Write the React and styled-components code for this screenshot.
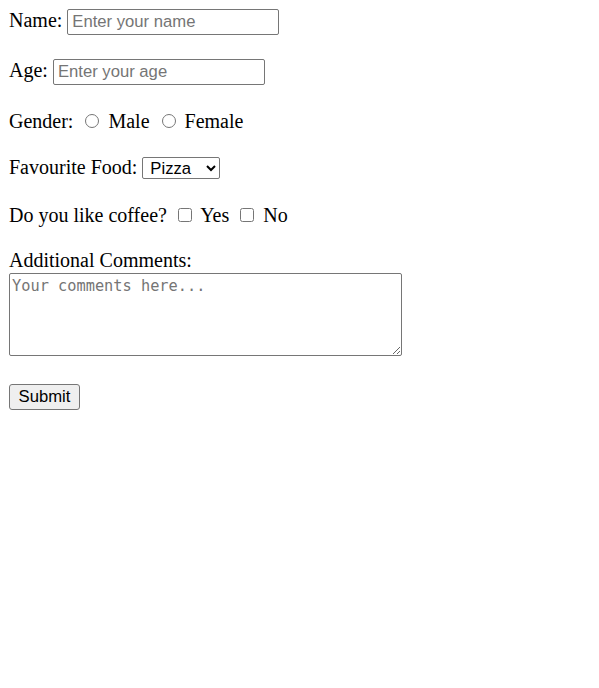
import React from "react";
import styled, { createGlobalStyle } from "styled-components";

const Global = createGlobalStyle`
  body {
    margin: 8px;
    font-family: "Liberation Serif", "Times New Roman", serif;
    font-size: 20px;
    color: #000;
    background: #fff;
  }
`;

const Form = styled.form`
  display: block;
  padding: 1px 0 0 1px;
`;

const Field = styled.div`
  margin-bottom: ${(p) => p.$gap ?? 24}px;
`;

const Label = styled.label``;

const TextInput = styled.input`
  font-family: "Liberation Sans", Arial, sans-serif;
  font-size: 16.67px;
  padding: 2px 4px;
  border: 1px solid #767676;
  border-radius: 2px;
  box-sizing: border-box;
  height: 26px;
  width: 212px;
  &::placeholder {
    color: #757575;
  }
`;

const Choice = styled.input`
  width: 14px;
  height: 14px;
  margin: 3px 4px 0 ${(p) => (p.type === "radio" ? 7 : 6)}px;
`;

const Select = styled.select`
  font-family: "Liberation Sans", Arial, sans-serif;
  font-size: 16.67px;
  width: 78px;
  height: 22px;
  box-sizing: border-box;
  border: 1px solid #767676;
  border-radius: 2px;
  padding: 0 0 0 3px;
  background: #fff;
  color: #000;
`;

const Area = styled.textarea`
  display: block;
  font-family: "DejaVu Sans Mono", monospace;
  font-size: 15.3px;
  width: 393px;
  height: 83px;
  box-sizing: border-box;
  border: 1px solid #767676;
  border-radius: 2px;
  padding: 3px 2px;
  margin: 1px 0 0;
  &::placeholder {
    color: #757575;
  }
`;

const Button = styled.button`
  font-family: "Liberation Sans", Arial, sans-serif;
  font-size: 16.67px;
  height: 26px;
  width: 71px;
  padding: 0;
  box-sizing: border-box;
  border: 1px solid #767676;
  border-radius: 3px;
  background: #efefef;
  color: #000;
`;

export default function App() {
  return (
    <>
      <Global />
      <Form onSubmit={(e) => e.preventDefault()}>
        <Field $gap={24}>
          <Label htmlFor="name">Name:</Label>{" "}
          <TextInput id="name" type="text" placeholder="Enter your name" />
        </Field>
        <Field $gap={25}>
          <Label htmlFor="age">Age:</Label>{" "}
          <TextInput id="age" type="text" placeholder="Enter your age" />
        </Field>
        <Field $gap={23}>
          <Label>Gender:</Label>{" "}
          <Choice type="radio" name="gender" id="male" />{" "}
          <Label htmlFor="male">Male</Label>{" "}
          <Choice type="radio" name="gender" id="female" />{" "}
          <Label htmlFor="female">Female</Label>
        </Field>
        <Field $gap={25}>
          <Label htmlFor="food">Favourite Food:</Label>{" "}
          <Select id="food" defaultValue="pizza">
            <option value="pizza">Pizza</option>
            <option value="burger">Burger</option>
            <option value="pasta">Pasta</option>
            <option value="sushi">Sushi</option>
          </Select>
        </Field>
        <Field $gap={22}>
          <Label>Do you like coffee?</Label>{" "}
          <Choice type="checkbox" id="yes" />{" "}
          <Label htmlFor="yes">Yes</Label>{" "}
          <Choice type="checkbox" id="no" />{" "}
          <Label htmlFor="no">No</Label>
        </Field>
        <Field $gap={28}>
          <Label htmlFor="comments">Additional Comments:</Label>
          <Area id="comments" placeholder="Your comments here..." />
        </Field>
        <Field>
          <Button type="submit">Submit</Button>
        </Field>
      </Form>
    </>
  );
}
